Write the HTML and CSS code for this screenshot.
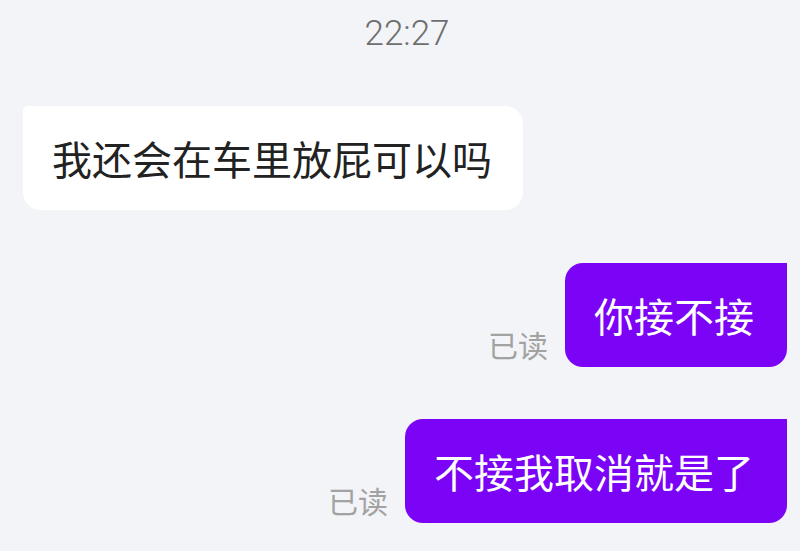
FILE: index.html
```html
<!doctype html>
<html lang="zh-CN">
  <head>
    <meta charset="UTF-8" />
    <meta name="viewport" content="width=device-width, initial-scale=1.0" />
    <title>聊天</title>
    <link rel="stylesheet" href="styles.css">
  </head>
  <body>
    <div class="chat">
      <div class="time">22:27</div>

      <div class="row row-in">
        <div class="bubble bubble-in">我还会在车里放屁可以吗</div>
      </div>

      <div class="row row-out">
        <span class="read">已读</span>
        <div class="bubble bubble-out">你接不接</div>
      </div>

      <div class="row row-out">
        <span class="read">已读</span>
        <div class="bubble bubble-out">不接我取消就是了</div>
      </div>
    </div>
  </body>
</html>
```

FILE: styles.css
```css
html,
body {
  margin: 0;
  padding: 0;
  background-color: #f2f4f7;
}
body {
  font-family: "Noto Sans CJK SC", "Noto Sans", sans-serif;
  width: 800px;
  height: 551px;
  overflow: hidden;
}
.chat {
  display: flex;
  flex-direction: column;
  padding: 14px 13px 0 23px;
}
.time {
  font-family: Roboto, "Noto Sans", sans-serif;
  font-weight: 300;
  font-size: 35px;
  line-height: 40px;
  color: #6e6e6e;
  text-align: center;
  margin-left: 4px;
}
.row {
  display: flex;
  align-items: flex-end;
}
.row-in {
  justify-content: flex-start;
  margin-top: 52px;
}
.row-out {
  justify-content: flex-end;
  margin-top: 53px;
}
.row-out + .row-out {
  margin-top: 52px;
}
.bubble {
  font-size: 40px;
  line-height: 104px;
  height: 104px;
  padding: 0 31px 0 29px;
  white-space: nowrap;
}
.bubble-in {
  background-color: #ffffff;
  color: #222222;
  border-radius: 5px 18px 18px 18px;
}
.bubble-out {
  background-color: #7b03f6;
  color: #ffffff;
  border-radius: 18px 0 18px 18px;
  padding-right: 33px;
}
.read {
  font-size: 30px;
  line-height: 30px;
  color: #a2a2a2;
  margin: 0 17px 8px 0;
}
```
